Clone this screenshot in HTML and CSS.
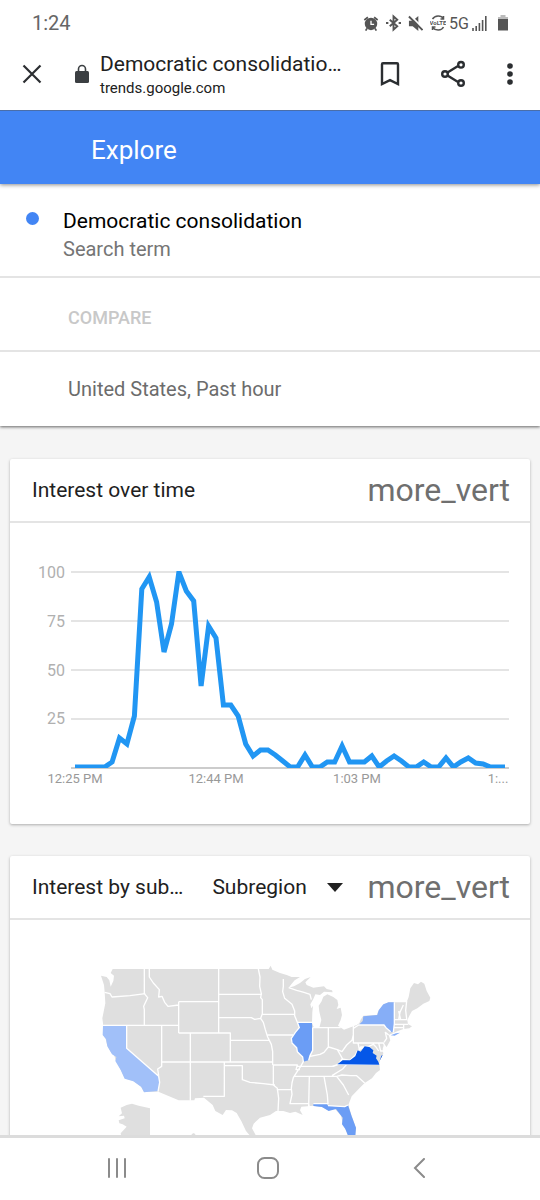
FILE: index.html
```html
<!DOCTYPE html>
<html lang="en">
<head>
<meta charset="utf-8">
<meta name="viewport" content="width=device-width, initial-scale=1">
<title>Democratic consolidation - Explore</title>
<link rel="stylesheet" href="styles.css">
</head>
<body>
<div class="screen">
  <div class="status">
    <span class="clock">1:24</span>
    <div class="status-icons">
      <svg width="16" height="17" viewBox="0 0 18 18" fill="none" stroke="#555" stroke-width="2"><circle cx="9" cy="9.500" r="6" fill="#555"/><path d="M1.500 5l4-3M16.500 5l-4-3M4.500 14.500L3 17M13.500 14.500L15 17"/><path stroke="#fff" stroke-width="1.500" d="M9 6v4h3.500"/></svg>
      <svg width="15" height="18" viewBox="0 0 16 18" fill="none" stroke="#555" stroke-width="2"><path d="M4 5.500l8 7-4 3.500V2l4 3.500-8 7"/><path d="M0 9h2.500M13.500 9H16"/></svg>
      <svg width="15" height="17" viewBox="1 0 16 18"><path fill="#555" d="M2 6h4l6-5v16l-6-5H2z"/><path stroke="#fff" stroke-width="2" d="M3.500 .5l14 14"/><path stroke="#555" stroke-width="2" d="M2 1.500l14.500 14.500"/></svg>
      <svg class="volte-icon" width="16" height="18" viewBox="0 0 16 18" fill="none" stroke="#555" stroke-width="1.500"><path d="M2.500 5C5 1 11 1 13.500 4.500M13.500 13c-2 4-8 4-11 .5M13.500 2v3h-3M2.500 16v-3h3"/><text class="volte" x="8" y="11" text-anchor="middle">VoLTE</text></svg>
      <span class="network">5G</span>
      <svg class="signal" width="15" height="16" viewBox="0 0 15 16" stroke="#555" stroke-width="1.600"><path d="M1 16v-3M4.200 16v-5M7.400 16V8M10.600 16V5M13.800 16V1"/></svg>
      <svg width="12" height="18" viewBox="0 0 12 18"><path fill="#bbb" d="M3.500 1h5v2H11v3H1V3h2.500z"/><path fill="#555" d="M1 5h10v11.500H1z"/></svg>
    </div>
  </div>

  <div class="toolbar">
    <button class="icon-btn" aria-label="Close"><svg width="20" height="20" viewBox="0 0 20 20" stroke="#2b2e31" stroke-width="2.200"><path d="M1.500 1.500l17 17M18.500 1.500l-17 17"/></svg></button>
    <svg class="lock" width="16" height="20" viewBox="0 0 16 20"><rect x="1" y="7" width="14" height="12" rx="1.500" fill="#3b3f42"/><path d="M4.500 8V5a3.500 3.500 0 0 1 7 0v3" fill="none" stroke="#3b3f42" stroke-width="1.600"/></svg>
    <div class="page-id">
      <div class="page-title">Democratic consolidatio…</div>
      <div class="page-host">trends.google.com</div>
    </div>
    <div class="actions">
      <button class="icon-btn" aria-label="Bookmark"><svg width="20" height="26" viewBox="0 0 20 26" fill="none" stroke="#2b2e31" stroke-width="2.400"><path d="M2 3.200q0-1 1-1h14q1 0 1 1V23l-8-3.800L2 23z"/></svg></button>
      <button class="icon-btn" aria-label="Share"><svg width="26" height="28" viewBox="0 0 26 28" fill="none" stroke="#2b2e31" stroke-width="2.400"><path d="M7.500 12.500L18 6M7.500 15.500L18 22"/><circle cx="5" cy="14" r="2.800"/><circle cx="21" cy="4.800" r="2.800"/><circle cx="21" cy="23" r="2.800"/></svg></button>
      <button class="icon-btn" aria-label="More options"><svg width="8" height="24" viewBox="0 0 8 24" fill="#2b2e31"><circle cx="4" cy="4" r="2.800"/><circle cx="4" cy="12" r="2.800"/><circle cx="4" cy="20" r="2.800"/></svg></button>
    </div>
  </div>

  <main class="content">
    <header class="app-bar"><h1 class="app-title">Explore</h1></header>
    <section class="query">
      <div class="term">
        <span class="dot"></span>
        <div>
          <div class="term-name">Democratic consolidation</div>
          <div class="term-kind">Search term</div>
        </div>
      </div>
      <button class="query-row compare">COMPARE</button>
      <button class="query-row filters">United States, Past hour</button>
    </section>

    <section class="card">
      <div class="card-head">
        <h2 class="card-title">Interest over time</h2>
        <button class="more">more_vert</button>
      </div>
      <svg class="chart" viewBox="0 1 520 301" role="img" aria-label="Interest over time">
        <defs><clipPath id="plot"><rect x="60" y="49" width="440" height="197"/></clipPath></defs>
        <path class="grid" d="M61 50H499M61 99H499M61 148H499M61 197H499"/>
        <path class="axis" d="M61 246H499"/>
        <g class="y-labels"><text x="55" y="56">100</text><text x="55" y="105">75</text><text x="55" y="154">50</text><text x="55" y="202">25</text></g>
        <polyline class="series" clip-path="url(#plot)" points="65,245 72.400,245 79.800,245 87.300,245 94.700,245 102.100,240 109.500,216 116.900,222 124.400,194 131.800,67 139.200,55 146.600,80 154,130 161.500,102 168.900,50 176.300,69 183.700,79 191.100,164 198.600,104 206,116 213.400,183 220.800,183 228.200,194 235.700,222 243.100,234 250.500,228 257.900,228 265.300,233 272.800,239 280.200,245 287.600,245 295,233 302.400,245 309.900,245 317.300,240 324.700,240 332.100,224 339.500,240 347,240 354.400,240 361.800,234 369.200,245 376.600,239 384.100,234 391.500,239 398.900,245 406.300,245 413.700,240 421.200,245 428.600,245 436,236 443.400,245 450.800,240 458.300,236 465.700,241 473.100,242 480.500,245 487.900,245 495,245"/>
        <g class="x-labels"><text x="65" y="261">12:25 PM</text><text x="206" y="261">12:44 PM</text><text x="347" y="261">1:03 PM</text><text x="488" y="261">1:...</text></g>
      </svg>
    </section>

    <section class="card">
      <div class="card-head">
        <h2 class="card-title">Interest by sub…</h2>
        <span class="picker">
          <select class="region" aria-label="Resolution"><option>Subregion</option><option>Metro</option><option>City</option></select>
          <svg class="caret" width="16" height="9" viewBox="0 0 16 9"><path d="M0 0h16L8 9z"/></svg>
        </span>
        <button class="more">more_vert</button>
      </div>
      <div class="map-wrap">
        <svg class="map" viewBox="0 0 1050 600" role="img" aria-label="Interest by subregion, United States">
          <path class="land" d="M68 42H536L542 32L547 44L570 54L590 60L605 66L630 66L614 76L604 88L596 98L612 94L630 84L645 72L662 66L646 82L650 90L670 98L702 94L710 102L726 106L728 112L702 110L690 120L676 118L670 132L661 148L664 160L669 152L667 172L666 205L672 218L688 218L694 195L688 170L686 152L694 140L700 125L712 118L730 126L742 135L745 150L740 162L752 158L756 180L752 195L744 212L762 224L800 210L808 205L812 194L820 182L860 180L864 170L880 150L895 142H950L956 126L961 100L972 84L984 88L993 80L1003 86L1010 108L1021 128L1018 138L1000 146L982 160L966 168L958 182L952 196L954 208L966 214L958 220L940 222L918 230L896 240L901 256L890 276L882 268L878 282L880 296L870 316L868 326L870 345L858 354L846 370L824 384L806 402L785 424L775 450L785 482L798 520L796 540L774 540L758 505L753 482L735 462L716 466L695 456L670 452L634 455L630 466L638 480L616 470L600 474L580 468L558 468L540 480L510 488L491 506L486 520L498 542L480 542L468 528L455 500L440 474L426 466L408 465L398 480L376 468L368 450L342 428L315 430L313 436H266L205 410L162 410L152 394L130 378L104 370L90 340L78 318L72 300L62 290L52 272L47 252L39 240V205L37 190L46 145L44 112L42 90L33 62L50 66L58 76L62 95L70 78L72 62L62 54Z"/>
          <path class="land" d="M180 460V545H94L92 535L110 515L98 508L88 505L86 496L104 490L102 482L86 484L96 475L92 458L110 450L126 446L146 452ZM304 538l8-4 5 6-5 5z"/>
          <path class="state ca" d="M39 212H110V280L206 364L209 380L204 408L162 412L154 396L130 379L104 371L92 345L76 318L79 306L66 298L52 274L48 252L38 240Z"/>
          <path class="state il" d="M622 202H666L668 286L660 302L656 316L640 320L638 306L622 290L620 278L604 262L606 242L616 232L628 218Z"/>
          <path class="state ny" d="M806 210L818 198L820 184L862 180L866 166L880 148L896 142H913V206L910 230L902 232L888 218L882 210Z"/>
          <path class="state fl" d="M670 446H710L714 452L764 455L774 450L785 484L798 518L796 542L774 542L766 522L756 508L758 488L738 462L716 468L696 456L670 453Z"/>
          <path class="borders" d="M44 112L60 116L66 126L120 122L166 116M163 42V116L173 128L161 154L163 164V211M38 211H266M178 42V66L190 84L208 104L206 126L216 124L224 142L234 154L266 150V140M266 140H386M266 140V234M386 42V234M266 234H421V320M386 118H516M386 188H484L494 193L512 190M505 42L510 66L509 94L514 116L512 128L517 134V176L512 190L520 202L526 224L533 246L544 268L548 290V330M517 178H614M533 240H610M421 256H538M215 211V334L203 342L206 362M215 321H550M110 211V280L206 364L209 382L204 410M301 234V437M403 321V424H340M403 332H457V374L480 382L520 386L555 390M550 330V390L562 400L566 430L564 470M550 330H622L618 344H630M560 404H606M580 72V94L578 110L584 130L606 148L614 168V182L622 202H666M622 202L628 218L616 232L604 250L606 264L620 278L622 290L638 306L640 320L632 334L620 352L610 368L606 384L604 400L606 418L600 446H656L658 456M596 98L620 106L642 112L660 118L664 134M668 218V286L660 302L656 316M668 218H752M715 218V276L702 292L690 298L660 304M790 212V240L786 256L770 270L756 290L742 284L716 276M790 212V264H880L886 276M790 220L806 210H882L888 218L902 230M896 240L886 232L890 250L882 262M950 138L947 166L950 192M913 142V206L910 232M926 168L932 194M940 150L930 172L926 194M912 194H952M912 208H954M941 208V222M912 218H940M745 328L756 312L780 316L796 300L802 288L826 274L836 274L812 276L808 284L804 264M745 328H868M622 334H730L745 328M770 328L758 342L726 362M614 364H740L756 360L782 362L800 362L824 384M658 364L656 456M702 364L712 420L714 446H670M714 452L764 455L774 450M740 364L760 390L776 420M742 284L758 312L745 328L726 334M836 274L850 268L858 276L866 288M866 264L872 288H880"/>
          <path class="state ny" d="M902 241L918 235L930 233L914 242Z"/>
          <path class="state va" d="M742 328L758 316L780 316L796 304L803 286L812 290L824 274L838 276L850 286L848 294L860 302L858 310L865 320L868 329ZM869 318L874 302L878 300Z"/>
        </svg>
      </div>
    </section>
  </main>

  <nav class="nav">
    <button class="nav-btn" aria-label="Recents"><svg width="20" height="20" viewBox="0 0 20 20" stroke="#8b8b8b" stroke-width="2" stroke-linecap="round"><path d="M2 1v18M10 1v18M18 1v18"/></svg></button>
    <button class="nav-btn" aria-label="Home"><svg width="22" height="22" viewBox="0 0 22 22" fill="none" stroke="#8b8b8b" stroke-width="2"><rect x="1" y="1" width="20" height="20" rx="6.500"/></svg></button>
    <button class="nav-btn" aria-label="Back"><svg width="12" height="20" viewBox="0 0 12 20" fill="none" stroke="#8b8b8b" stroke-width="2" stroke-linecap="round"><path d="M11 1L2 10l9 9"/></svg></button>
  </nav>
</div>
</body>
</html>
```
FILE: styles.css
```css
* { box-sizing: border-box; }
body { margin: 0; font-family: Roboto, sans-serif; color: #212121; background: #fff; }
button { margin: 0; padding: 0; border: 0; background: none; font: inherit; color: inherit; text-align: left; }
svg { display: block; flex: none; }
h1, h2 { margin: 0; font-weight: 400; }

.screen { display: flex; flex-direction: column; height: 100vh; overflow: hidden; }

.status { display: flex; justify-content: space-between; align-items: center; height: 46px; padding: 0 31px 0 32px; }
.clock { font-size: 20px; color: #666; }
.status-icons { display: flex; align-items: center; gap: 7px; }
.volte { font: 700 6px Roboto, sans-serif; fill: #555; stroke: none; }
.network { font-size: 16px; color: #555; margin: 0 -4px; }
.signal { margin-right: 3px; }

.toolbar { display: flex; align-items: center; height: 64px; padding: 0 26px 8px 22px; }
.icon-btn { display: flex; align-items: center; justify-content: center; }
.lock { margin: 0 10px 0 32px; }
.page-id { flex: 1; min-width: 0; }
.page-title { font-size: 21px; line-height: 28px; white-space: nowrap; }
.page-host { font-size: 15px; line-height: 20px; }
.actions { display: flex; align-items: center; gap: 40px; margin-left: 32px; }

.content { flex: 1; min-height: 0; overflow: hidden; background: #f5f5f5; }
.app-bar { position: relative; display: flex; align-items: center; height: 74px; padding: 4px 91px 0; background: #4285f4; border-top: 1px solid #4a6ea9; color: #fff; box-shadow: 0 1px 4px rgba(0, 0, 0, .45); }
.app-title { font-size: 26px; }

.query { background: #fff; box-shadow: 0 1px 3px rgba(0, 0, 0, .6); }
.term { display: flex; gap: 24px; padding: 23px 26px 15px; height: 94px; border-bottom: 2px solid #e4e4e4; }
.dot { width: 13px; height: 13px; margin-top: 5px; border-radius: 50%; background: #4285f4; }
.term-name { font-size: 21px; line-height: 28px; color: #000; }
.term-kind { font-size: 20px; line-height: 28px; color: #757575; }
.query-row { display: block; width: 100%; height: 74px; padding: 0 68px; }
.compare { padding-top: 6px; border-bottom: 2px solid #e4e4e4; font-size: 18px; font-weight: 500; color: #c8c8c8; }
.filters { font-size: 20px; color: #6c6c6c; }

.card { margin: 0 10px 32px; background: #fff; border-radius: 2px; box-shadow: 0 1px 3px rgba(0, 0, 0, .3); }
.query + .card { margin-top: 33px; }
.card-head { display: flex; align-items: center; height: 64px; padding: 0 20px 0 22px; border-bottom: 2px solid #e4e4e4; }
.card-title { flex: 1; min-width: 0; font-size: 21px; white-space: nowrap; }
.more { font-size: 32px; line-height: 40px; color: #6f6f6f; }
.picker { display: flex; align-items: center; gap: 20px; margin: 0 24px; }
.region { appearance: none; padding: 0; border: 0; background: none; font: 21px Roboto, sans-serif; color: #212121; }
.caret { fill: #212121; }

.chart { width: 100%; height: auto; }
.grid { stroke: #e4e4e4; stroke-width: 2; }
.axis { stroke: #999; stroke-width: 1; }
.series { fill: none; stroke: #2196f3; stroke-width: 5; }
.y-labels { font-size: 16px; fill: #b0b0b0; text-anchor: end; }
.x-labels { font-size: 13px; fill: #999; text-anchor: middle; }

.map-wrap { padding: 35px 90px 0 80px; }
.map { width: 100%; height: auto; }
.land { fill: #dfdfdf; }
.borders { fill: none; stroke: #fff; stroke-width: 4; stroke-linejoin: round; }
.ca { fill: #a1c0f9; }
.il { fill: #6b9df5; }
.ny { fill: #86aef7; }
.fl { fill: #6b9df5; }
.va { fill: #0557e8; }

.nav { position: relative; display: flex; align-items: center; justify-content: space-between; height: 65px; padding: 0 110px 2px 106px; background: #fff; border-top: 3px solid #dcdcdc; }
.nav-btn { display: flex; justify-content: center; width: 22px; }
```
